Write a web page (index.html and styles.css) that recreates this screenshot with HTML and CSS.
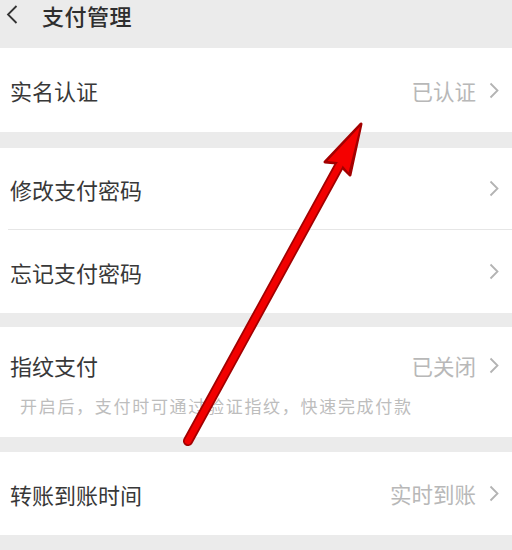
FILE: index.html
```html
<!DOCTYPE html>
<html lang="zh">
<head>
<meta charset="utf-8">
<link rel="stylesheet" href="styles.css">
</head>
<body>
<div class="page">
  <header class="topbar">
    <svg class="back" width="12" height="20" viewBox="0 0 12 20"><polyline points="10.5,1 2,9.5 10.5,18" fill="none" stroke="#333" stroke-width="1.8"/></svg>
    <span class="title">支付管理</span>
  </header>

  <section class="group">
    <div class="row r84">
      <span class="label">实名认证</span>
      <span class="right"><span class="value">已认证</span><svg class="chev" width="10" height="17" viewBox="0 0 10 17"><polyline points="1.5,1.5 8.5,8.5 1.5,15.5" fill="none" stroke="#b3b3b3" stroke-width="1.8"/></svg></span>
    </div>
  </section>

  <section class="group g2">
    <div class="row r81">
      <span class="label">修改支付密码</span>
      <span class="right"><svg class="chev" width="10" height="17" viewBox="0 0 10 17"><polyline points="1.5,1.5 8.5,8.5 1.5,15.5" fill="none" stroke="#b3b3b3" stroke-width="1.8"/></svg></span>
    </div>
    <div class="divider"></div>
    <div class="row r83">
      <span class="label">忘记支付密码</span>
      <span class="right"><svg class="chev" width="10" height="17" viewBox="0 0 10 17"><polyline points="1.5,1.5 8.5,8.5 1.5,15.5" fill="none" stroke="#b3b3b3" stroke-width="1.8"/></svg></span>
    </div>
  </section>

  <section class="group g3">
    <div class="row-tall">
      <div class="row-head">
        <span class="label">指纹支付</span>
        <span class="right"><span class="value">已关闭</span><svg class="chev" width="10" height="17" viewBox="0 0 10 17"><polyline points="1.5,1.5 8.5,8.5 1.5,15.5" fill="none" stroke="#b3b3b3" stroke-width="1.8"/></svg></span>
      </div>
      <div class="desc">开启后，支付时可通过验证指纹，快速完成付款</div>
    </div>
  </section>

  <section class="group g4">
    <div class="row r83">
      <span class="label">转账到账时间</span>
      <span class="right"><span class="value">实时到账</span><svg class="chev" width="10" height="17" viewBox="0 0 10 17"><polyline points="1.5,1.5 8.5,8.5 1.5,15.5" fill="none" stroke="#b3b3b3" stroke-width="1.8"/></svg></span>
    </div>
  </section>

  <svg class="arrow" width="512" height="550" viewBox="0 0 512 550">
    <line x1="188" y1="441" x2="339" y2="166" stroke="#a30000" stroke-width="10" stroke-linecap="round"/>
    <polygon points="361,124 325,162 336,163 343,168 350,175" fill="#a30000" stroke="#a30000" stroke-width="3" stroke-linejoin="round"/>
    <line x1="188" y1="441" x2="339" y2="166" stroke="#f20000" stroke-width="6.5" stroke-linecap="round"/>
    <polygon points="360,126.5 327.5,161 337,162 343.5,166.5 348.5,172.5" fill="#f50000"/>
  </svg>
</div>
</body>
</html>
```

FILE: styles.css
```css
html, body {
  margin: 0;
  padding: 0;
  background: #ebebeb;
}

.page {
  position: relative;
  width: 512px;
  height: 550px;
  overflow: hidden;
  font-family: "Noto Sans CJK SC", "Noto Sans", sans-serif;
  color: #363636;
}

.topbar {
  height: 48px;
  box-sizing: border-box;
  padding: 0 0 19px 6px;
  display: flex;
  align-items: center;
  background: #ebebeb;
}

.back {
  display: block;
}

.title {
  margin-left: 24px;
  font-size: 22px;
  font-weight: 500;
  color: #2e2e2e;
  letter-spacing: 0.5px;
}

.group {
  background: #fff;
}

.g2 {
  margin-top: 16px;
}

.g3 {
  margin-top: 14px;
}

.g4 {
  margin-top: 15px;
}

.row {
  display: flex;
  align-items: center;
  justify-content: space-between;
  padding: 0 13px 0 10px;
}

.r84 { height: 84px; }
.r81 { height: 81px; }
.r83 { height: 83px; }

.label {
  font-size: 22px;
  color: #383838;
}

.right {
  display: flex;
  align-items: center;
}

.value {
  font-size: 21.5px;
  color: #b8b8b8;
  margin-right: 13px;
}

.chev {
  display: block;
}

.divider {
  height: 1px;
  margin-left: 8px;
  background: #e6e6e6;
}

.row-tall {
  height: 110px;
  box-sizing: border-box;
  padding: 22px 13px 0 10px;
}

.row-head {
  display: flex;
  align-items: center;
  justify-content: space-between;
  height: 32px;
}

.desc {
  margin: 14px 0 0 10px;
  font-size: 17px;
  letter-spacing: 1.7px;
  color: #bdbdbd;
  line-height: 22px;
}

.arrow {
  position: absolute;
  left: 0;
  top: 0;
  pointer-events: none;
}
```
